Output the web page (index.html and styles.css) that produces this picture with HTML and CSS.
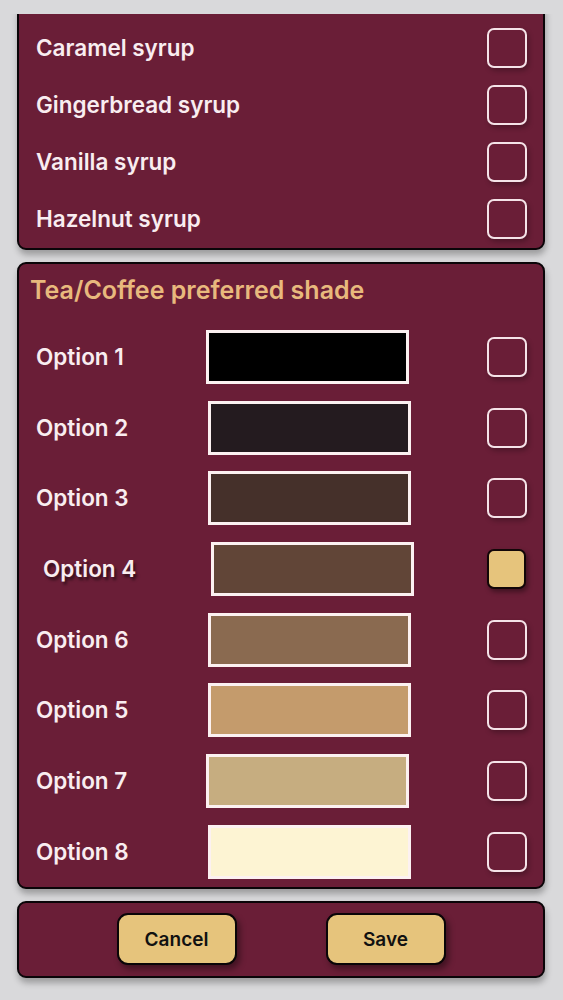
FILE: index.html
```html
<!DOCTYPE html>
<html>
<head>
<meta charset="utf-8">
<link rel="stylesheet" href="styles.css">
</head>
<body>
<div class="viewport">
  <div class="card card-syrups">
    <div class="syrup-row"><span class="label">Caramel syrup</span><span class="check"></span></div>
    <div class="syrup-row"><span class="label">Gingerbread syrup</span><span class="check"></span></div>
    <div class="syrup-row"><span class="label">Vanilla syrup</span><span class="check"></span></div>
    <div class="syrup-row"><span class="label">Hazelnut syrup</span><span class="check"></span></div>
  </div>

  <div class="card card-shade">
    <div class="title">Tea/Coffee preferred shade</div>
    <div class="shade-row"><span class="label">Option 1</span><span class="swatch s1"></span><span class="check"></span></div>
    <div class="shade-row"><span class="label">Option 2</span><span class="swatch s2 nudge"></span><span class="check"></span></div>
    <div class="shade-row"><span class="label">Option 3</span><span class="swatch s3 nudge"></span><span class="check"></span></div>
    <div class="shade-row selected"><span class="label">Option 4</span><span class="swatch s4"></span><span class="check checked"></span></div>
    <div class="shade-row"><span class="label">Option 6</span><span class="swatch s6 nudge"></span><span class="check"></span></div>
    <div class="shade-row"><span class="label">Option 5</span><span class="swatch s5 nudge"></span><span class="check"></span></div>
    <div class="shade-row"><span class="label">Option 7</span><span class="swatch s7"></span><span class="check"></span></div>
    <div class="shade-row"><span class="label">Option 8</span><span class="swatch s8 nudge"></span><span class="check"></span></div>
  </div>

  <div class="card card-actions">
    <button class="btn">Cancel</button>
    <button class="btn">Save</button>
  </div>
</div>
</body>
</html>
```

FILE: styles.css
```css
html, body {
  margin: 0;
  padding: 0;
  background: #d9d9db;
}
body {
  font-family: Inter, Roboto, "Liberation Sans", sans-serif;
  width: 563px;
  height: 1000px;
  overflow: hidden;
}
.viewport {
  margin-top: 14px;
  height: 986px;
  overflow: hidden;
  padding: 0 18px 0 17px;
  display: flex;
  flex-direction: column;
  gap: 12px;
}
.card {
  background: #6a1e37;
  border: 2px solid #0a0508;
  border-radius: 9px;
  box-shadow: 1px 5px 6px rgba(0, 0, 0, 0.28);
}
.card-syrups {
  margin-top: -12px;
  padding: 15.5px 16px 0 17px;
}
.syrup-row {
  height: 57px;
  display: flex;
  align-items: center;
  justify-content: space-between;
}
.label {
  color: #f9edf0;
  font-weight: 600;
  font-size: 22.5px;
  line-height: 28px;
}
.check {
  width: 36px;
  height: 36px;
  border: 2px solid #f5e3e8;
  border-radius: 7px;
  box-shadow: 2px 3px 5px rgba(0, 0, 0, 0.25);
  flex: none;
}
.check.checked {
  width: 35px;
  height: 36px;
  background: #e6c47c;
  border-color: #120608;
  box-shadow: 2px 3px 5px rgba(0, 0, 0, 0.4);
  margin-right: 1px;
}
.card-shade {
  padding: 11px 16px 0 17px;
  height: 627px;
  box-sizing: border-box;
}
.title {
  color: #e8b97d;
  font-weight: 600;
  font-size: 25px;
  line-height: 30px;
  margin-left: -6px;
  margin-bottom: 17px;
}
.shade-row {
  height: 70.7px;
  display: flex;
  align-items: center;
}
.shade-row .label {
  width: 170px;
  flex: none;
}
.shade-row .check {
  margin-left: auto;
}
.swatch {
  width: 197px;
  height: 48px;
  border: 3px solid #fcf1f1;
  flex: none;
}
.swatch.nudge {
  margin-left: 2px;
}
.shade-row.selected .label {
  padding-left: 7px;
  width: 168px;
  text-shadow: 2px 3px 3px rgba(0, 0, 0, 0.55);
}
.s1 { background: #000000; }
.s2 { background: #241b1f; }
.s3 { background: #45302a; }
.s4 { background: #614537; }
.s6 { background: #8a6a50; }
.s5 { background: #c49b6c; }
.s7 { background: #c6ad80; }
.s8 { background: #fdf4d3; }
.card-actions {
  height: 77px;
  box-sizing: border-box;
  display: flex;
  align-items: center;
  justify-content: center;
  gap: 89px;
}
.btn {
  width: 120px;
  height: 52px;
  background: #e6c47c;
  border: 2px solid #0a0508;
  border-radius: 11px;
  font-family: inherit;
  font-weight: 600;
  font-size: 19px;
  color: #111;
  box-shadow: 3px 4px 6px rgba(0, 0, 0, 0.4);
  padding: 0;
}
```
